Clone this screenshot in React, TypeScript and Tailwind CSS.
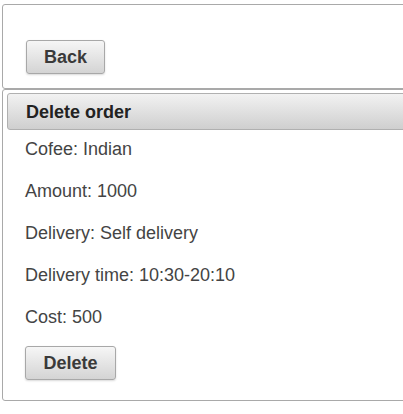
import React from 'react';

const order = [
  { label: 'Cofee', value: 'Indian' },
  { label: 'Amount', value: '1000' },
  { label: 'Delivery', value: 'Self delivery' },
  { label: 'Delivery time', value: '10:30-20:10' },
  { label: 'Cost', value: '500' },
];

const btn =
  'h-[34px] rounded-[3px] border border-[#a8a8a8] bg-gradient-to-b from-[#f6f6f6] to-[#d4d4d4] text-[18px] font-bold text-[#3a3a3a] shadow-[0_1px_2px_rgba(0,0,0,0.15)]';

const App: React.FC = () => {
  return (
    <div className="w-screen h-screen overflow-hidden bg-white font-['Liberation_Sans',Arial,sans-serif] text-[#333]">
      <div className="w-[430px] pl-[2px] pt-[4px]">
        {/* Top toolbar */}
        <div className="h-[85px] rounded-[3px] border border-[#a9a9a9] pl-[23px] pt-[35px]">
          <button className={`${btn} w-[79px]`}>Back</button>
        </div>

        {/* Delete order panel */}
        <div className="h-[312px] rounded-[3px] border border-[#a9a9a9] pl-[4px] pt-[3px]">
          <div className="h-[37px] flex items-center rounded-[3px] border border-[#b0b0b0] bg-gradient-to-b from-[#f2f2f2] to-[#cfcfcf] pl-[18px] pt-[2px] text-[18px] font-bold text-[#222]">
            Delete order
          </div>
          <div className="pl-[18px] pt-[8px]">
            {order.map((o) => (
              <p key={o.label} className="h-[42px] text-[18px] leading-[22px] text-[#444]">
                {o.label}: {o.value}
              </p>
            ))}
            <button className={`${btn} w-[91px] mt-[-2px]`}>Delete</button>
          </div>
        </div>
      </div>
    </div>
  );
};

export default App;
